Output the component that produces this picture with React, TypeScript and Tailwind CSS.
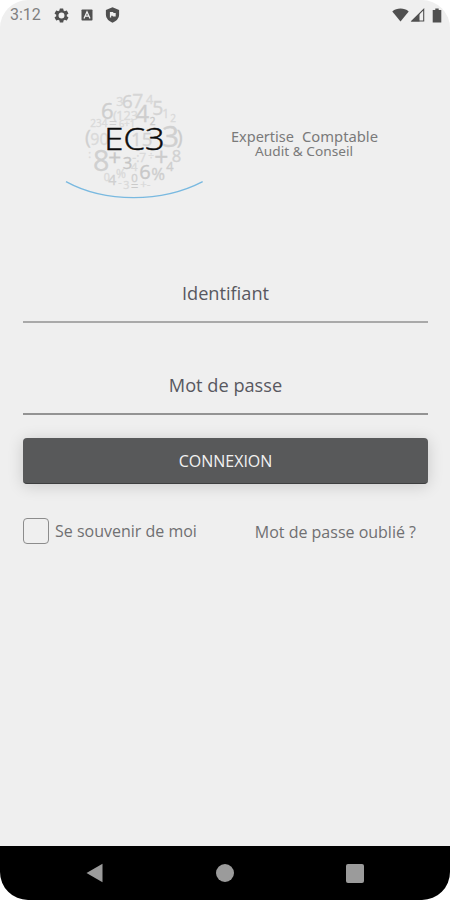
import { useState } from "react";

const digits: { t: string; x: number; y: number; s: number; c?: string }[] = [
  { t: "3", x: 184, y: 64, s: 38 },
  { t: "6", x: 201, y: 70, s: 56, c: "#d2d2d2" },
  { t: "7", x: 232, y: 70, s: 58, c: "#d6d6d6" },
  { t: "4", x: 273, y: 58, s: 38 },
  { t: "6", x: 138, y: 101, s: 66, c: "#cecece" },
  { t: "(", x: 174, y: 104, s: 40 },
  { t: "123", x: 184, y: 105, s: 38 },
  { t: "4", x: 242, y: 111, s: 70, c: "#cecece" },
  { t: "5", x: 292, y: 89, s: 58, c: "#d4d4d4" },
  { t: "1", x: 322, y: 100, s: 36 },
  { t: "2", x: 346, y: 110, s: 30 },
  { t: "234", x: 106, y: 126, s: 30 },
  { t: "=", x: 163, y: 128, s: 38, c: "#d0d0d0" },
  { t: "6+1", x: 192, y: 126, s: 28 },
  { t: "2", x: 284, y: 119, s: 30, c: "#cacaca" },
  { t: "(", x: 90, y: 178, s: 60, c: "#d0d0d0" },
  { t: "90", x: 106, y: 179, s: 48 },
  { t: "15", x: 228, y: 183, s: 56, c: "#d4d4d4" },
  { t: "3", x: 321, y: 185, s: 90, c: "#d0d0d0" },
  { t: ")", x: 365, y: 178, s: 60, c: "#cccccc" },
  { t: ":", x: 100, y: 220, s: 32 },
  { t: "8", x: 114, y: 259, s: 86, c: "#d0d0d0" },
  { t: "+", x: 160, y: 241, s: 68, c: "#c8c8c8" },
  { t: "3", x: 203, y: 251, s: 50, c: "#c6c6c6" },
  { t: "-:7", x: 232, y: 230, s: 36 },
  { t: "4", x: 228, y: 257, s: 34 },
  { t: "÷", x: 280, y: 226, s: 30 },
  { t: "+", x: 298, y: 243, s: 74, c: "#cccccc" },
  { t: "8", x: 350, y: 232, s: 50, c: "#d2d2d2" },
  { t: "6", x: 253, y: 282, s: 60, c: "#c8c8c8" },
  { t: "%", x: 289, y: 284, s: 50, c: "#cecece" },
  { t: "4", x: 334, y: 259, s: 38, c: "#cecece" },
  { t: "0", x: 146, y: 288, s: 32 },
  { t: "4", x: 160, y: 299, s: 42, c: "#d0d0d0" },
  { t: "%", x: 183, y: 280, s: 36 },
  { t: "0", x: 229, y: 291, s: 34, c: "#d0d0d0" },
  { t: "-", x: 190, y: 304, s: 32 },
  { t: "3", x: 205, y: 311, s: 32 },
  { t: "=", x: 228, y: 319, s: 38, c: "#cacaca" },
  { t: "+-", x: 256, y: 309, s: 34 },
];

function StatusBar() {
  return (
    <div className="flex h-[30px] items-center pl-[10px] pr-[8px] text-[#505050]">
      <span className="w-[43px] font-[Roboto] text-[16px] leading-none text-[#808080]">3:12</span>
      <svg width="17" height="17" viewBox="0 0 24 24" fill="currentColor" className="shrink-0">
        <path
          fillRule="evenodd"
          d="M19.43 12.98a7.8 7.8 0 0 0 0-1.96l2.11-1.65a.5.5 0 0 0 .12-.64l-2-3.46a.5.5 0 0 0-.61-.22l-2.49 1a7.3 7.3 0 0 0-1.69-.98l-.38-2.65A.5.5 0 0 0 14 2h-4a.5.5 0 0 0-.49.42l-.38 2.65c-.61.25-1.17.59-1.69.98l-2.49-1a.5.5 0 0 0-.61.22l-2 3.46a.5.5 0 0 0 .12.64l2.11 1.65a7.8 7.8 0 0 0 0 1.96l-2.11 1.65a.5.5 0 0 0-.12.64l2 3.46c.12.22.39.3.61.22l2.49-1c.52.4 1.08.73 1.69.98l.38 2.65c.03.24.24.42.49.42h4c.25 0 .46-.18.49-.42l.38-2.65a7.3 7.3 0 0 0 1.69-.98l2.49 1c.23.09.49 0 .61-.22l2-3.46a.5.5 0 0 0-.12-.64zM12 16.2a4.2 4.2 0 1 1 0-8.4 4.2 4.2 0 0 1 0 8.4z"
        />
      </svg>
      <svg width="12" height="12" viewBox="0 0 12 12" className="ml-[11px] shrink-0">
        <rect x="0.5" y="0.5" width="11" height="11" rx="0.8" fill="currentColor" />
        <path d="M3 9.5 6 2.8 9 9.5M4.2 7.2h3.6" fill="none" stroke="#efefef" strokeWidth="1.3" />
      </svg>
      <svg width="15" height="16" viewBox="0 0 14 16" className="ml-[12px] shrink-0">
        <path d="M7 .3 13.6 2.9v4.7c0 3.7-2.8 6.7-6.6 8.1C3.2 14.3.4 11.3.4 7.6V2.9z" fill="currentColor" />
        <path d="M4.4 10.6V5.1h3.2l.4 1h2.2v3.5H7.4l-.4-.9H5.7v1.9z" fill="#efefef" />
      </svg>
      <div className="ml-auto flex items-center">
        <svg width="17" height="14" viewBox="0 0 17 14">
          <path d="M8.5 13.5.3 3.4C2.6 1.6 5.5.6 8.5.6s5.9 1 8.2 2.8z" fill="currentColor" />
        </svg>
        <svg width="15" height="14" viewBox="0 0 15 14" className="ml-[1px]">
          <path d="M13.7 1.4V13H2z" fill="none" stroke="currentColor" strokeWidth="1.1" />
          <path d="M9.5 5.2V13.5H1z" fill="currentColor" />
        </svg>
        <svg width="10" height="15" viewBox="0 0 10 15" className="ml-[7px]">
          <path d="M3.3.4h3.4V2h2.6v12.6H.7V2h2.6z" fill="currentColor" />
        </svg>
      </div>
    </div>
  );
}

function Logo() {
  return (
    <svg width="160" height="120" viewBox="0 0 480 360" fontFamily="'Open Sans', sans-serif">
      {digits.map((d, i) => (
        <text key={i} x={d.x} y={d.y} fontSize={d.s} fill={d.c ?? "#dadada"} stroke={d.c ?? "#dadada"} strokeWidth="1">
          {d.t}
        </text>
      ))}
      <text x="148" y="196" fontSize="92" fontWeight="300" fill="#0c0c0c" stroke="#0c0c0c" strokeWidth="1.5" textLength="181" lengthAdjust="spacingAndGlyphs">
        EC3
      </text>
      <path d="M33 290C150 354 320 354 443 290" fill="none" stroke="#79b9e0" strokeWidth="4" />
    </svg>
  );
}

function Tagline() {
  return (
    <svg width="155" height="40" viewBox="0 0 155 40" fontFamily="'Noto Sans', sans-serif" fill="#7a7a7a">
      <text x="2" y="17" fontSize="14.5" textLength="63" lengthAdjust="spacingAndGlyphs">Expertise</text>
      <text x="73" y="17" fontSize="14.5" textLength="76" lengthAdjust="spacingAndGlyphs">Comptable</text>
      <text x="26" y="30.5" fontSize="12" textLength="98" lengthAdjust="spacingAndGlyphs">Audit &amp; Conseil</text>
    </svg>
  );
}

export default function App() {
  const [login, setLogin] = useState("");
  const [password, setPassword] = useState("");
  const [remember, setRemember] = useState(false);

  return (
    <div className="h-[900px] w-[450px] bg-white font-['Open_Sans',sans-serif]">
      <div className="flex h-full flex-col overflow-hidden rounded-[28px] bg-[#efefef]">
        <StatusBar />

        {/* Logo */}
        <div className="mt-[55px] flex h-[120px] items-start pl-[55px]">
          <Logo />
          <div className="ml-[14px] mt-[40px]">
            <Tagline />
          </div>
        </div>

        <form className="flex flex-col pl-[23px] pr-[22px]" onSubmit={(e) => e.preventDefault()}>
          <input
            type="text"
            placeholder="Identifiant"
            value={login}
            onChange={(e) => setLogin(e.target.value)}
            className="mt-[63px] h-[55px] border-b-2 border-[#a9a9a9] pb-[3px] text-center text-[18.2px] text-[#58585f] placeholder:text-[#58585f] focus:outline-none"
          />
          <input
            type="password"
            placeholder="Mot de passe"
            value={password}
            onChange={(e) => setPassword(e.target.value)}
            className="mt-[37px] h-[55px] border-b-2 border-[#939393] pb-[3px] text-center text-[18.2px] text-[#58585f] placeholder:text-[#58585f] focus:outline-none"
          />

          <button
            type="submit"
            className="mt-[23px] h-[46px] rounded-[4px] border-b border-[#3d3e3f] bg-[#58595a] text-[16px] text-[#f2f2f2] shadow-[0_2px_16px_rgba(0,0,0,0.16)]"
          >
            CONNEXION
          </button>

          <div className="mt-[33px] flex h-[27px] items-center">
            <label className="flex items-center gap-[6px] text-[16px] text-[#707072]">
              <input
                type="checkbox"
                checked={remember}
                onChange={(e) => setRemember(e.target.checked)}
                className="h-[26px] w-[26px] appearance-none rounded-[4px] border border-[#8c8c8c] checked:bg-[#58595a]"
              />
              Se souvenir de moi
            </label>
            <a href="#" className="ml-auto mr-[12px] pt-[2px] text-[16px] text-[#707072]">
              Mot de passe oublié ?
            </a>
          </div>
        </form>

        {/* Android navigation */}
        <div className="mt-auto flex h-[54px] items-center justify-between bg-black pl-[86px] pr-[86px]">
          <svg width="18" height="20" viewBox="0 0 18 20">
            <path d="M16.5.8v18.4L.5 10z" fill="#9b9b9b" />
          </svg>
          <div className="h-[18px] w-[18px] rounded-full bg-[#9b9b9b]" />
          <div className="h-[19px] w-[18px] rounded-[2px] bg-[#9b9b9b]" />
        </div>
      </div>
    </div>
  );
}
